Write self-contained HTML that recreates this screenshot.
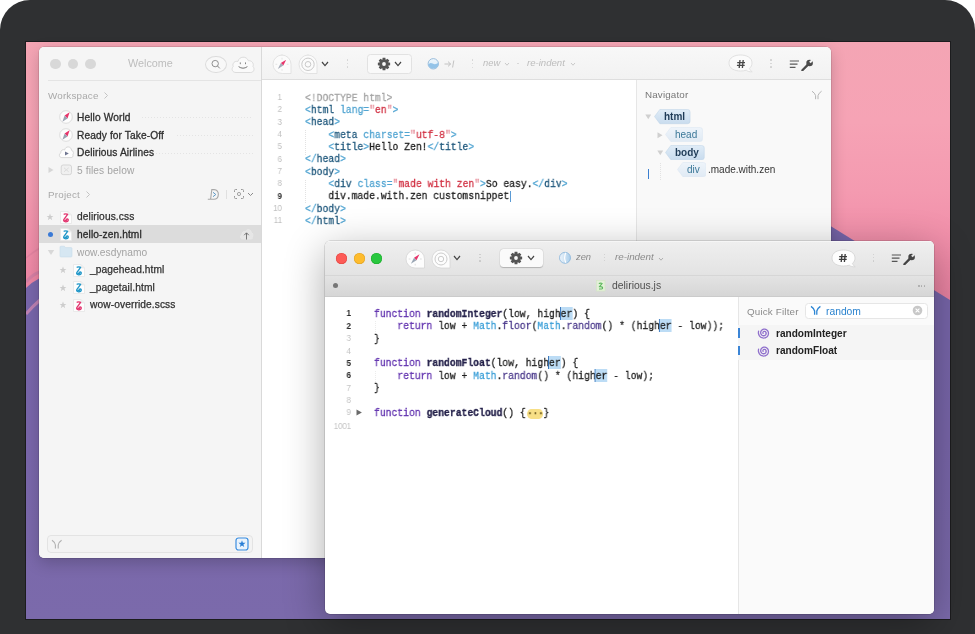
<!DOCTYPE html>
<html><head><meta charset="utf-8">
<style>
*{margin:0;padding:0;box-sizing:border-box}
html,body{width:975px;height:634px;overflow:hidden;background:#fff;font-family:"Liberation Sans",sans-serif}
.abs{position:absolute}
.t{position:absolute;white-space:pre;line-height:1;will-change:transform}
.win{position:absolute;border-radius:5px;overflow:hidden}
.tl{position:absolute;border-radius:50%}
.p{color:#52a5d2}.n{color:#225a7e}.a{color:#52a5d2}.q{color:#e58895}.v{color:#d23345}
.kf{color:#5f2fae}.fn{color:#24214a;font-weight:bold}.mt{color:#3da0d8}.pm{color:#4b3a8c}.hl{background:#bcdcf5;box-shadow:-1px 0 0 #2f6fb8}.pill{display:inline-block;background:#f7df86;border-radius:5px/5px;width:19.5px;height:10px;line-height:8px;text-align:center;color:#6e5c20;vertical-align:0px;font-weight:bold;letter-spacing:-0.5px;margin:0 0 0 1.5px}
</style></head><body>

<div class="abs" style="left:0;top:0;width:975px;height:634px;background:#2f3032;border-radius:30px 30px 0 0"></div>
<div class="abs" style="left:25px;top:41px;width:926px;height:579px;background:#1c1c1e"></div>
<div class="abs" style="left:26px;top:42px;width:924px;height:577px;overflow:hidden;background:linear-gradient(180deg,#f4a5b4 0px,#f6a3b5 80px,#f49ab0 150px,#f08ca8 210px,#ea82a2 260px,#e07c9c 300px)">
<svg width="924" height="577" style="position:absolute;left:0;top:0">
<defs><linearGradient id="pg" x1="0" y1="0" x2="0" y2="1"><stop offset="0.3" stop-color="#7866ab"/><stop offset="0.55" stop-color="#7966aa"/><stop offset="1" stop-color="#7b6aab"/></linearGradient></defs>
<path d="M0,246 Q6,240 14,236 L790,175 L924,258 L924,577 L0,577 Z" fill="url(#pg)"/>
<path d="M0,240 Q7,232 14,230" stroke="#c77ba5" stroke-width="3" fill="none" opacity=".6"/>
<path d="M0,272 Q7,264 14,258" stroke="#d58cb6" stroke-width="3" fill="none" opacity=".75"/>
<path d="M0,216 Q7,210 14,206" stroke="#dc7f9f" stroke-width="1.6" fill="none" opacity=".6"/>
</svg>
</div>
<div class="win" style="left:39px;top:47px;width:792px;height:511px;background:#f5f5f5;box-shadow:0 0 0 0.5px rgba(0,0,0,.18),0 5px 16px rgba(0,0,0,.2)">
<div class="abs" style="left:0px;top:0px;width:222px;height:511px;background:#f5f5f5"></div>
<div class="abs" style="left:222px;top:0px;width:1px;height:511px;background:#d9d9d9"></div>
<div class="tl" style="left:11.1px;top:11.6px;width:10.8px;height:10.8px;background:#d8d8d8"></div>
<div class="tl" style="left:28.7px;top:11.6px;width:10.8px;height:10.8px;background:#d8d8d8"></div>
<div class="tl" style="left:46.3px;top:11.6px;width:10.8px;height:10.8px;background:#d8d8d8"></div>
<div class="t" style="left:89.40px;top:11.22px;font-size:10.8px;color:#bdbdbd;font-weight:normal;font-family:'Liberation Sans',sans-serif;">Welcome</div>
<div class="abs" style="left:166px;top:8.5px;width:21.5px;height:17px;border:1px solid #dcdcdc;border-radius:50%;background:#f8f8f8"></div>
<svg class="abs" style="left:170px;top:11px;" width="13" height="12" viewBox="0 0 13 12"><circle cx="6.2" cy="5.6" r="3.2" fill="none" stroke="#858585" stroke-width="0.9"/><line x1="8.5" y1="8" x2="10.8" y2="10.4" stroke="#858585" stroke-width="1"/></svg>
<svg class="abs" style="left:191px;top:6px;" width="26" height="22" viewBox="0 0 26 22"><path d="M6,19.5 C2.2,19.5 1,15.8 3.2,13.6 C2,10.2 4.8,7.6 8,8.4 C9,3.2 16.6,2.6 18.4,7.8 C21.6,7.2 24.2,10.4 23,13.6 C25,15.6 24,19.5 20.5,19.5 Z" fill="#fafafa" stroke="#d8d8d8" stroke-width="0.9"/><path d="M10.3,9.4 V11.2 M15.5,9.4 V11.2" stroke="#777" stroke-width="0.9"/><path d="M8.6,13.6 Q13,16.8 17.4,13.6" fill="none" stroke="#777" stroke-width="1"/></svg>
<div class="abs" style="left:9px;top:33px;width:213px;height:1px;background:#e4e4e4"></div>
<div class="t" style="left:9.00px;top:44.37px;font-size:9.8px;color:#a9a9a9;font-weight:normal;font-family:'Liberation Sans',sans-serif;letter-spacing:0.19px">Workspace</div>
<svg class="abs" style="left:64px;top:44px;" width="6" height="9" viewBox="0 0 6 9"><path d="M1.5,1.5 L4.5,4.5 L1.5,7.5" fill="none" stroke="#bdbdbd" stroke-width="0.9"/></svg>
<svg class="abs" style="left:19.099999999999994px;top:61.900000000000006px;" width="16" height="16" viewBox="0 0 16 16"><circle cx="8" cy="8" r="6.3" fill="#fdfdfd" stroke="#d6d6d6" stroke-width="0.8"/><path d="M11.6,3.2 L9.5,9.4 L6.6,6.5 Z" fill="#e8336a"/><path d="M4.4,12.8 L6.6,6.5 L9.5,9.4 Z" fill="#9aa2b2"/></svg>
<div class="t" style="left:37.70px;top:65.93px;font-size:10.2px;color:#2f2f2f;font-weight:normal;font-family:'Liberation Sans',sans-serif;-webkit-text-stroke:0.3px #2f2f2f;letter-spacing:0.1px">Hello World</div>
<svg class="abs" style="left:19.099999999999994px;top:79.5px;" width="16" height="16" viewBox="0 0 16 16"><circle cx="8" cy="8" r="6.3" fill="#fdfdfd" stroke="#d6d6d6" stroke-width="0.8"/><path d="M11.6,3.2 L9.5,9.4 L6.6,6.5 Z" fill="#e8336a"/><path d="M4.4,12.8 L6.6,6.5 L9.5,9.4 Z" fill="#9aa2b2"/></svg>
<div class="t" style="left:37.70px;top:83.63px;font-size:10.2px;color:#2f2f2f;font-weight:normal;font-family:'Liberation Sans',sans-serif;-webkit-text-stroke:0.3px #2f2f2f;letter-spacing:0.1px">Ready for Take-Off</div>
<svg class="abs" style="left:19px;top:98px;" width="16" height="14" viewBox="0 0 16 14"><path d="M3.8,12.6 C1,12.6 0.6,8.8 2.8,7.9 C2.4,5.2 5,4 6.6,5 C7.3,0.8 13.2,0.8 13.6,5.4 C15.6,5.6 15.9,8.8 14.8,9.8 C15.6,11.4 14.4,12.6 13.2,12.6 Z" fill="#fdfdfd" stroke="#cfcfcf" stroke-width="0.8"/><path d="M7,6.4 L10.8,8.5 L7,10.6 Z" fill="#6e7590"/></svg>
<div class="t" style="left:37.70px;top:101.33px;font-size:10.2px;color:#2f2f2f;font-weight:normal;font-family:'Liberation Sans',sans-serif;-webkit-text-stroke:0.3px #2f2f2f;letter-spacing:0.1px">Delirious Airlines</div>
<div class="abs" style="left:102.5px;top:70px;width:111.5px;height:1px;background-image:linear-gradient(90deg,#dcdcdc 50%,transparent 50%);background-size:3px 1px;opacity:.7"></div>
<div class="abs" style="left:137.5px;top:88px;width:76.5px;height:1px;background-image:linear-gradient(90deg,#dcdcdc 50%,transparent 50%);background-size:3px 1px;opacity:.7"></div>
<div class="abs" style="left:116.5px;top:105.5px;width:97.5px;height:1px;background-image:linear-gradient(90deg,#dcdcdc 50%,transparent 50%);background-size:3px 1px;opacity:.7"></div>
<svg class="abs" style="left:8px;top:119px;" width="8" height="8" viewBox="0 0 8 8"><path d="M1.5,1 L6.5,4 L1.5,7 Z" fill="#d6d6d6"/></svg>
<svg class="abs" style="left:21px;top:117px;" width="13" height="12" viewBox="0 0 13 12"><rect x="1.2" y="1" width="10.3" height="9.6" rx="2" fill="#f0f0f0" stroke="#d3d3d3" stroke-width="0.9"/><path d="M4,3.8 L8.7,7.8 M8.7,3.8 L4,7.8" stroke="#dcdcdc" stroke-width="1"/></svg>
<div class="t" style="left:37.70px;top:119.23px;font-size:10.2px;color:#a3a3a3;font-weight:normal;font-family:'Liberation Sans',sans-serif;letter-spacing:0.1px">5 files below</div>
<div class="t" style="left:8.80px;top:143.47px;font-size:9.8px;color:#a9a9a9;font-weight:normal;font-family:'Liberation Sans',sans-serif;letter-spacing:0.21px">Project</div>
<svg class="abs" style="left:45.5px;top:143px;" width="6" height="9" viewBox="0 0 6 9"><path d="M1.5,1.5 L4.5,4.5 L1.5,7.5" fill="none" stroke="#bdbdbd" stroke-width="0.9"/></svg>
<svg class="abs" style="left:168px;top:141px;" width="14" height="13" viewBox="0 0 14 13"><path d="M3.6,11.2 L4.8,1.6 H7.2 C13,1.6 12.6,11.2 6.8,11.2 H0.8" fill="none" stroke="#a8a8a8" stroke-width="1.1"/><path d="M6,4.3 L8.8,6.5 L6,8.7" fill="none" stroke="#5f9ac6" stroke-width="1"/></svg>
<div class="abs" style="left:187px;top:143px;width:1px;height:9px;background:#e0e0e0"></div>
<svg class="abs" style="left:194px;top:141px;" width="24" height="13" viewBox="0 0 24 13"><path d="M1.5,4 V2.5 Q1.5,1.5 2.5,1.5 H4 M8,1.5 H9.5 Q10.5,1.5 10.5,2.5 V4 M10.5,8 V9.5 Q10.5,10.5 9.5,10.5 H8 M4,10.5 H2.5 Q1.5,10.5 1.5,9.5 V8" fill="none" stroke="#9a9a9a" stroke-width="1"/><circle cx="6" cy="6" r="1.6" fill="none" stroke="#9a9a9a" stroke-width="0.9"/><path d="M15,5 L17.5,7.5 L20,5" fill="none" stroke="#8a8a8a" stroke-width="1"/></svg>
<div class="abs" style="left:0px;top:178px;width:222px;height:18px;background:#dcdcdc"></div>
<svg class="abs" style="left:7px;top:166.3px;" width="8" height="8" viewBox="0 0 8 8"><path d="M4,0.6 L4.9,3 L7.4,3 L5.4,4.6 L6.2,7.2 L4,5.6 L1.8,7.2 L2.6,4.6 L0.6,3 L3.1,3 Z" fill="#cdcdcd"/></svg>
<svg class="abs" style="left:21px;top:163.5px;" width="12" height="13" viewBox="0 0 12 13"><path d="M0.5,0.5 H8 L11.5,4 V12.5 H0.5 Z" fill="#fdfdfd" stroke="#e6e6e6" stroke-width="0.8"/><path d="M8,0.5 V4 H11.5" fill="#eee" stroke="#e6e6e6" stroke-width="0.6"/><path d="M4.2,3.2 Q6.5,2.6 7.6,3.4 L3.8,8.6 Q3.2,10.6 5.6,10.8 Q8.6,10.8 8.2,8.6 Q7.6,7.6 6.2,8.4" fill="none" stroke="#e3356f" stroke-width="1.35" stroke-linejoin="round" stroke-linecap="round"/><path d="M3.9,9.3 Q5.5,8.2 7.6,9.4 Q6.8,10.6 4.8,10.4 Z" fill="#e3356f"/></svg>
<div class="t" style="left:37.80px;top:165.23px;font-size:10.2px;color:#2f2f2f;font-weight:normal;font-family:'Liberation Sans',sans-serif;-webkit-text-stroke:0.25px #2f2f2f;letter-spacing:0.1px">delirious.css</div>
<div class="tl" style="left:8.600000000000001px;top:184.70000000000002px;width:5.2px;height:5.2px;background:#3a7ad6"></div>
<svg class="abs" style="left:21px;top:181px;" width="12" height="13" viewBox="0 0 12 13"><path d="M0.5,0.5 H8 L11.5,4 V12.5 H0.5 Z" fill="#fdfdfd" stroke="#e6e6e6" stroke-width="0.8"/><path d="M8,0.5 V4 H11.5" fill="#eee" stroke="#e6e6e6" stroke-width="0.6"/><path d="M4.2,3.2 Q6.5,2.6 7.6,3.4 L3.8,8.6 Q3.2,10.6 5.6,10.8 Q8.6,10.8 8.2,8.6 Q7.6,7.6 6.2,8.4" fill="none" stroke="#1e96c8" stroke-width="1.35" stroke-linejoin="round" stroke-linecap="round"/><path d="M3.9,9.3 Q5.5,8.2 7.6,9.4 Q6.8,10.6 4.8,10.4 Z" fill="#1e96c8"/></svg>
<div class="t" style="left:37.80px;top:183.13px;font-size:10.2px;color:#2a2a2a;font-weight:normal;font-family:'Liberation Sans',sans-serif;-webkit-text-stroke:0.3px #2a2a2a;letter-spacing:0.1px">hello-zen.html</div>
<svg class="abs" style="left:200px;top:180px;" width="15" height="14" viewBox="0 0 15 14"><path d="M3.5,12 C1,12 0.8,8.6 2.8,7.8 C2.6,5 5,3.8 6.5,4.8 C7.5,1.5 12,1.8 12.3,5.6 C14.2,6 14.3,9 13.5,10 C14,11.3 13,12 12.2,12 Z" fill="#e6e6e6" stroke="#ececec" stroke-width="0.6"/><path d="M7.5,12.5 V6 M5.2,8.2 L7.5,5.8 L9.8,8.2" fill="none" stroke="#6a6a6a" stroke-width="0.9"/></svg>
<svg class="abs" style="left:8px;top:202px;" width="8" height="7" viewBox="0 0 8 7"><path d="M0.8,1 L7.2,1 L4,6 Z" fill="#d8d8d8"/></svg>
<svg class="abs" style="left:20px;top:198px;" width="14" height="13" viewBox="0 0 14 13"><path d="M1,2.2 Q1,1.2 2,1.2 H5.3 L6.5,2.6 H12 Q13,2.6 13,3.6 V11 Q13,12 12,12 H2 Q1,12 1,11 Z" fill="#d6e7f2" stroke="#c8dcea" stroke-width="0.6"/></svg>
<div class="t" style="left:37.80px;top:200.73px;font-size:10.2px;color:#a3a3a3;font-weight:normal;font-family:'Liberation Sans',sans-serif;letter-spacing:0.05px">wow.esdynamo</div>
<svg class="abs" style="left:19.5px;top:219px;" width="8" height="8" viewBox="0 0 8 8"><path d="M4,0.6 L4.9,3 L7.4,3 L5.4,4.6 L6.2,7.2 L4,5.6 L1.8,7.2 L2.6,4.6 L0.6,3 L3.1,3 Z" fill="#cdcdcd"/></svg>
<svg class="abs" style="left:34px;top:216.5px;" width="12" height="13" viewBox="0 0 12 13"><path d="M0.5,0.5 H8 L11.5,4 V12.5 H0.5 Z" fill="#fdfdfd" stroke="#e6e6e6" stroke-width="0.8"/><path d="M8,0.5 V4 H11.5" fill="#eee" stroke="#e6e6e6" stroke-width="0.6"/><path d="M4.2,3.2 Q6.5,2.6 7.6,3.4 L3.8,8.6 Q3.2,10.6 5.6,10.8 Q8.6,10.8 8.2,8.6 Q7.6,7.6 6.2,8.4" fill="none" stroke="#1e96c8" stroke-width="1.35" stroke-linejoin="round" stroke-linecap="round"/><path d="M3.9,9.3 Q5.5,8.2 7.6,9.4 Q6.8,10.6 4.8,10.4 Z" fill="#1e96c8"/></svg>
<div class="t" style="left:50.50px;top:218.23px;font-size:10.2px;color:#2f2f2f;font-weight:normal;font-family:'Liberation Sans',sans-serif;-webkit-text-stroke:0.25px #2f2f2f;letter-spacing:0.1px">_pagehead.html</div>
<svg class="abs" style="left:19.5px;top:236.5px;" width="8" height="8" viewBox="0 0 8 8"><path d="M4,0.6 L4.9,3 L7.4,3 L5.4,4.6 L6.2,7.2 L4,5.6 L1.8,7.2 L2.6,4.6 L0.6,3 L3.1,3 Z" fill="#cdcdcd"/></svg>
<svg class="abs" style="left:34px;top:234px;" width="12" height="13" viewBox="0 0 12 13"><path d="M0.5,0.5 H8 L11.5,4 V12.5 H0.5 Z" fill="#fdfdfd" stroke="#e6e6e6" stroke-width="0.8"/><path d="M8,0.5 V4 H11.5" fill="#eee" stroke="#e6e6e6" stroke-width="0.6"/><path d="M4.2,3.2 Q6.5,2.6 7.6,3.4 L3.8,8.6 Q3.2,10.6 5.6,10.8 Q8.6,10.8 8.2,8.6 Q7.6,7.6 6.2,8.4" fill="none" stroke="#1e96c8" stroke-width="1.35" stroke-linejoin="round" stroke-linecap="round"/><path d="M3.9,9.3 Q5.5,8.2 7.6,9.4 Q6.8,10.6 4.8,10.4 Z" fill="#1e96c8"/></svg>
<div class="t" style="left:50.50px;top:235.63px;font-size:10.2px;color:#2f2f2f;font-weight:normal;font-family:'Liberation Sans',sans-serif;-webkit-text-stroke:0.25px #2f2f2f;letter-spacing:0.1px">_pagetail.html</div>
<svg class="abs" style="left:19.5px;top:254px;" width="8" height="8" viewBox="0 0 8 8"><path d="M4,0.6 L4.9,3 L7.4,3 L5.4,4.6 L6.2,7.2 L4,5.6 L1.8,7.2 L2.6,4.6 L0.6,3 L3.1,3 Z" fill="#cdcdcd"/></svg>
<svg class="abs" style="left:34px;top:251.5px;" width="12" height="13" viewBox="0 0 12 13"><path d="M0.5,0.5 H8 L11.5,4 V12.5 H0.5 Z" fill="#fdfdfd" stroke="#e6e6e6" stroke-width="0.8"/><path d="M8,0.5 V4 H11.5" fill="#eee" stroke="#e6e6e6" stroke-width="0.6"/><path d="M4.2,3.2 Q6.5,2.6 7.6,3.4 L3.8,8.6 Q3.2,10.6 5.6,10.8 Q8.6,10.8 8.2,8.6 Q7.6,7.6 6.2,8.4" fill="none" stroke="#e3356f" stroke-width="1.35" stroke-linejoin="round" stroke-linecap="round"/><path d="M3.9,9.3 Q5.5,8.2 7.6,9.4 Q6.8,10.6 4.8,10.4 Z" fill="#e3356f"/></svg>
<div class="t" style="left:50.50px;top:252.83px;font-size:10.2px;color:#2f2f2f;font-weight:normal;font-family:'Liberation Sans',sans-serif;-webkit-text-stroke:0.25px #2f2f2f;letter-spacing:0.1px">wow-override.scss</div>
<div class="abs" style="left:8px;top:488px;width:206px;height:18px;border:1px solid #e3e3e3;border-radius:4px;background:#f3f3f3"></div>
<svg class="abs" style="left:11.5px;top:491.5px;" width="12" height="11" viewBox="0 0 12 11"><path d="M1,1.3 Q4,3.3 4.4,6 V9.6 M10.6,1.3 Q7.6,3.3 7.2,6 V9.6" fill="none" stroke="#b0b0b0" stroke-width="1.1"/></svg>
<svg class="abs" style="left:196px;top:490px;" width="14" height="14" viewBox="0 0 14 14"><rect x="1" y="1" width="12" height="12" rx="2.5" fill="#eaf3fc" stroke="#3b8ee0" stroke-width="1.2"/><path d="M7,3.3 L7.9,5.8 L10.6,5.8 L8.4,7.4 L9.2,10 L7,8.4 L4.8,10 L5.6,7.4 L3.4,5.8 L6.1,5.8 Z" fill="#2a7fd6"/></svg>
<div class="abs" style="left:223px;top:0px;width:569px;height:33px;background:linear-gradient(#f8f8f8,#f2f2f2);border-bottom:1px solid #dedede"></div>
<div class="abs" style="left:223px;top:33px;width:374px;height:478px;background:#fff"></div>
<div class="abs" style="left:597px;top:33px;width:195px;height:478px;background:#f9f9f9;border-left:1px solid #e6e6e6"></div>
<svg class="abs" style="left:233px;top:7px;" width="20" height="20.5" viewBox="0 0 20 20.5"><path d="M10.25,1 H9.75 A9.25,9.25 0 0 1 19,10.25 V19.5 H10.25 A9.25,9.25 0 0 1 1,10.25 A9.25,9.25 0 0 1 10.25,1 Z" fill="#fbfbfb" stroke="#e0e0e0" stroke-width="0.9"/><g transform="translate(10,10.3)"><path d="M0,-6.5 V-4.8 M0,4.8 V6.5 M-6.5,0 H-4.8 M4.8,0 H6.5" stroke="#ddd" stroke-width="0.8"/><path d="M4.2,-4.6 L1.3,1.2 L-1.2,-1.2 Z" fill="#e8336a"/><path d="M-4.2,4.6 L-1.2,-1.2 L1.3,1.2 Z" fill="#a4abb8"/></g></svg>
<svg class="abs" style="left:259px;top:7px;" width="20" height="20.5" viewBox="0 0 20 20.5"><path d="M10.25,1 H9.75 A9.25,9.25 0 0 1 19,10.25 V19.5 H10.25 A9.25,9.25 0 0 1 1,10.25 A9.25,9.25 0 0 1 10.25,1 Z" fill="#fbfbfb" stroke="#e0e0e0" stroke-width="0.9"/><circle cx="10" cy="10.3" r="6.2" fill="none" stroke="#c9c9c9" stroke-width="1"/><circle cx="10" cy="10.3" r="2.8" fill="none" stroke="#c9c9c9" stroke-width="1"/></svg>
<svg class="abs" style="left:282px;top:14.200000000000003px;" width="8" height="5.6" viewBox="0 0 8 5.6"><path d="M1,1 L4.0,4.6 L7,1" fill="none" stroke="#444" stroke-width="1.2"/></svg>
<div class="tl" style="left:307.9px;top:12.4px;width:1.2px;height:1.2px;background:#d4d4d4"></div>
<div class="tl" style="left:307.9px;top:15.9px;width:1.2px;height:1.2px;background:#d4d4d4"></div>
<div class="tl" style="left:307.9px;top:19.4px;width:1.2px;height:1.2px;background:#d4d4d4"></div>
<div class="abs" style="left:327.5px;top:6.5px;width:45px;height:20px;border:1px solid #e2e2e2;border-radius:3.5px;background:#f9f9f9"></div>
<svg class="abs" style="left:336.7px;top:8.799999999999997px;" width="16" height="16" viewBox="0 0 16 16"><g transform="translate(-375.7,-55.8)"><path d="M389.85,62.43 L389.85,65.17 L387.75,65.51 L387.78,65.45 L389.02,67.18 L387.08,69.12 L385.35,67.88 L385.41,67.85 L385.07,69.95 L382.33,69.95 L381.99,67.85 L382.05,67.88 L380.32,69.12 L378.38,67.18 L379.62,65.45 L379.65,65.51 L377.55,65.17 L377.55,62.43 L379.65,62.09 L379.62,62.15 L378.38,60.42 L380.32,58.48 L382.05,59.72 L381.99,59.75 L382.33,57.65 L385.07,57.65 L385.41,59.75 L385.35,59.72 L387.08,58.48 L389.02,60.42 L387.78,62.15 L387.75,62.09 Z" fill="#555"/><circle cx="383.7" cy="63.8" r="1.9" fill="#f9f9f9"/></g></svg>
<svg class="abs" style="left:355.4px;top:14.100000000000001px;" width="8" height="5.6" viewBox="0 0 8 5.6"><path d="M1,1 L4.0,4.6 L7,1" fill="none" stroke="#444" stroke-width="1.2"/></svg>
<svg class="abs" style="left:387px;top:10px;" width="14" height="14" viewBox="0 0 14 14"><defs><linearGradient id="bb1" x1="0" y1="0" x2="0" y2="1"><stop offset="0" stop-color="#eef6fc"/><stop offset="1" stop-color="#d6e9f7"/></linearGradient></defs><circle cx="7.3" cy="6.8" r="5.2" fill="url(#bb1)" stroke="#86b0d4" stroke-width="0.8"/><path d="M2.2,7.6 Q4,5.2 6.6,6.6 Q9.5,8 12.4,5.8 A5.2,5.2 0 0 1 2.2,7.6 Z" fill="#93c3e8"/></svg>
<svg class="abs" style="left:404px;top:12px;" width="13" height="10" viewBox="0 0 13 10"><path d="M1.5,5 H7.5 M5,2.6 L7.6,5 L5,7.4 M10.8,1.5 L9.6,8.5" fill="none" stroke="#bdbdbd" stroke-width="0.9"/></svg>
<div class="tl" style="left:433.1px;top:12.4px;width:1.2px;height:1.2px;background:#d4d4d4"></div>
<div class="tl" style="left:433.1px;top:16.0px;width:1.2px;height:1.2px;background:#d4d4d4"></div>
<div class="tl" style="left:433.1px;top:19.7px;width:1.2px;height:1.2px;background:#d4d4d4"></div>
<div class="t" style="left:443.90px;top:11.41px;font-size:9.4px;color:#bcbcbc;font-weight:normal;font-family:'Liberation Sans',sans-serif;font-style:italic">new</div>
<svg class="abs" style="left:464.7px;top:15.200000000000003px;" width="6" height="4.2" viewBox="0 0 6 4.2"><path d="M1,1 L3.0,3.2 L5,1" fill="none" stroke="#c4c4c4" stroke-width="0.9"/></svg>
<div class="tl" style="left:478.4px;top:16.0px;width:1.2px;height:1.2px;background:#d4d4d4"></div>
<div class="t" style="left:488.30px;top:11.24px;font-size:9.6px;color:#bcbcbc;font-weight:normal;font-family:'Liberation Sans',sans-serif;font-style:italic">re-indent</div>
<svg class="abs" style="left:530.7px;top:15.200000000000003px;" width="6" height="4.2" viewBox="0 0 6 4.2"><path d="M1,1 L3.0,3.2 L5,1" fill="none" stroke="#c4c4c4" stroke-width="0.9"/></svg>
<svg class="abs" style="left:689px;top:7px;" width="26" height="20" viewBox="0 0 26 20"><path d="M12.5,1 C18.5,1 24,3.5 24,9 C24,11.5 23,13 21.5,14.3 C22,16 23,17 24.2,17.8 C21.5,18 19.5,17.3 18.3,16.2 C16.5,16.8 14.5,17 12.5,17 C6.5,17 1,14.5 1,9 C1,3.5 6.5,1 12.5,1 Z" fill="#fbfbfb" stroke="#dedede" stroke-width="0.9"/></svg>
<svg class="abs" style="left:697.4px;top:12.299999999999997px;" width="10" height="10" viewBox="0 0 10 10"><path d="M4,1 L3.2,9 M7.2,1 L6.4,9 M1.2,3.6 H9 M0.9,6.4 H8.7" stroke="#4a4a4a" stroke-width="1.35" fill="none"/></svg>
<div class="tl" style="left:731.4px;top:12.4px;width:1.2px;height:1.2px;background:#d4d4d4"></div>
<div class="tl" style="left:731.4px;top:15.9px;width:1.2px;height:1.2px;background:#d4d4d4"></div>
<div class="tl" style="left:731.4px;top:19.4px;width:1.2px;height:1.2px;background:#d4d4d4"></div>
<svg class="abs" style="left:749px;top:12px;" width="27" height="12" viewBox="0 0 27 12"><path d="M1.8,2 H11 M1.8,5.2 H9.5 M1.8,8.4 H7.5" stroke="#5a5a5a" stroke-width="1.2"/><line x1="14.4" y1="11.2" x2="20" y2="5.6" stroke="#4a4a4a" stroke-width="2.3" stroke-linecap="round"/><circle cx="21.6" cy="4" r="3.3" fill="#4a4a4a"/><path d="M21.9,3.6 L25.5,0" stroke="#f4f4f4" stroke-width="2.1"/></svg>
<div class="t" style="left:243.30px;top:45.98px;font-size:9.2px;color:#c0c0c0;font-weight:normal;font-family:'Liberation Sans',sans-serif;transform:translateX(-100%) scaleX(.86);transform-origin:100% 0">1</div>
<div class="t" style="left:266.00px;top:44.66px;font-size:11.5px;color:#1d1d1d;font-weight:normal;font-family:'Liberation Mono',monospace;transform:scaleX(0.8452);transform-origin:0 0;-webkit-text-stroke:0.3px currentColor;"><span style="color:#a4a4a4">&lt;!DOCTYPE html&gt;</span></div>
<div class="t" style="left:243.30px;top:58.32px;font-size:9.2px;color:#c0c0c0;font-weight:normal;font-family:'Liberation Sans',sans-serif;transform:translateX(-100%) scaleX(.86);transform-origin:100% 0">2</div>
<div class="t" style="left:266.00px;top:57.00px;font-size:11.5px;color:#1d1d1d;font-weight:normal;font-family:'Liberation Mono',monospace;transform:scaleX(0.8452);transform-origin:0 0;-webkit-text-stroke:0.3px currentColor;"><span class="p">&lt;</span><span class="n">html</span> <span class="a">lang</span><span class="p">=</span><span class="q">"</span><span class="v">en</span><span class="q">"</span><span class="p">&gt;</span></div>
<div class="t" style="left:243.30px;top:70.66px;font-size:9.2px;color:#c0c0c0;font-weight:normal;font-family:'Liberation Sans',sans-serif;transform:translateX(-100%) scaleX(.86);transform-origin:100% 0">3</div>
<div class="t" style="left:266.00px;top:69.34px;font-size:11.5px;color:#1d1d1d;font-weight:normal;font-family:'Liberation Mono',monospace;transform:scaleX(0.8452);transform-origin:0 0;-webkit-text-stroke:0.3px currentColor;"><span class="p">&lt;</span><span class="n">head</span><span class="p">&gt;</span></div>
<div class="t" style="left:243.30px;top:83.00px;font-size:9.2px;color:#c0c0c0;font-weight:normal;font-family:'Liberation Sans',sans-serif;transform:translateX(-100%) scaleX(.86);transform-origin:100% 0">4</div>
<div class="t" style="left:266.00px;top:81.68px;font-size:11.5px;color:#1d1d1d;font-weight:normal;font-family:'Liberation Mono',monospace;transform:scaleX(0.8452);transform-origin:0 0;-webkit-text-stroke:0.3px currentColor;">    <span class="p">&lt;</span><span class="n">meta</span> <span class="a">charset</span><span class="p">=</span><span class="q">"</span><span class="v">utf-8</span><span class="q">"</span><span class="p">&gt;</span></div>
<div class="t" style="left:243.30px;top:95.34px;font-size:9.2px;color:#c0c0c0;font-weight:normal;font-family:'Liberation Sans',sans-serif;transform:translateX(-100%) scaleX(.86);transform-origin:100% 0">5</div>
<div class="t" style="left:266.00px;top:94.02px;font-size:11.5px;color:#1d1d1d;font-weight:normal;font-family:'Liberation Mono',monospace;transform:scaleX(0.8452);transform-origin:0 0;-webkit-text-stroke:0.3px currentColor;">    <span class="p">&lt;</span><span class="n">title</span><span class="p">&gt;</span>Hello Zen!<span class="p">&lt;/</span><span class="n">title</span><span class="p">&gt;</span></div>
<div class="t" style="left:243.30px;top:107.68px;font-size:9.2px;color:#c0c0c0;font-weight:normal;font-family:'Liberation Sans',sans-serif;transform:translateX(-100%) scaleX(.86);transform-origin:100% 0">6</div>
<div class="t" style="left:266.00px;top:106.36px;font-size:11.5px;color:#1d1d1d;font-weight:normal;font-family:'Liberation Mono',monospace;transform:scaleX(0.8452);transform-origin:0 0;-webkit-text-stroke:0.3px currentColor;"><span class="p">&lt;/</span><span class="n">head</span><span class="p">&gt;</span></div>
<div class="t" style="left:243.30px;top:120.02px;font-size:9.2px;color:#c0c0c0;font-weight:normal;font-family:'Liberation Sans',sans-serif;transform:translateX(-100%) scaleX(.86);transform-origin:100% 0">7</div>
<div class="t" style="left:266.00px;top:118.70px;font-size:11.5px;color:#1d1d1d;font-weight:normal;font-family:'Liberation Mono',monospace;transform:scaleX(0.8452);transform-origin:0 0;-webkit-text-stroke:0.3px currentColor;"><span class="p">&lt;</span><span class="n">body</span><span class="p">&gt;</span></div>
<div class="t" style="left:243.30px;top:132.36px;font-size:9.2px;color:#c0c0c0;font-weight:normal;font-family:'Liberation Sans',sans-serif;transform:translateX(-100%) scaleX(.86);transform-origin:100% 0">8</div>
<div class="t" style="left:266.00px;top:131.04px;font-size:11.5px;color:#1d1d1d;font-weight:normal;font-family:'Liberation Mono',monospace;transform:scaleX(0.8452);transform-origin:0 0;-webkit-text-stroke:0.3px currentColor;">    <span class="p">&lt;</span><span class="n">div</span> <span class="a">class</span><span class="p">=</span><span class="q">"</span><span class="v">made with zen</span><span class="q">"</span><span class="p">&gt;</span>So easy.<span class="p">&lt;/</span><span class="n">div</span><span class="p">&gt;</span></div>
<div class="t" style="left:243.30px;top:144.70px;font-size:9.2px;color:#333;font-weight:bold;font-family:'Liberation Sans',sans-serif;transform:translateX(-100%) scaleX(.86);transform-origin:100% 0">9</div>
<div class="t" style="left:266.00px;top:143.38px;font-size:11.5px;color:#1d1d1d;font-weight:normal;font-family:'Liberation Mono',monospace;transform:scaleX(0.8452);transform-origin:0 0;-webkit-text-stroke:0.3px currentColor;">    div.made.with.zen customsnippet</div>
<div class="t" style="left:243.30px;top:157.04px;font-size:9.2px;color:#c0c0c0;font-weight:normal;font-family:'Liberation Sans',sans-serif;transform:translateX(-100%) scaleX(.86);transform-origin:100% 0">10</div>
<div class="t" style="left:266.00px;top:155.72px;font-size:11.5px;color:#1d1d1d;font-weight:normal;font-family:'Liberation Mono',monospace;transform:scaleX(0.8452);transform-origin:0 0;-webkit-text-stroke:0.3px currentColor;"><span class="p">&lt;/</span><span class="n">body</span><span class="p">&gt;</span></div>
<div class="t" style="left:243.30px;top:169.38px;font-size:9.2px;color:#c0c0c0;font-weight:normal;font-family:'Liberation Sans',sans-serif;transform:translateX(-100%) scaleX(.86);transform-origin:100% 0">11</div>
<div class="t" style="left:266.00px;top:168.06px;font-size:11.5px;color:#1d1d1d;font-weight:normal;font-family:'Liberation Mono',monospace;transform:scaleX(0.8452);transform-origin:0 0;-webkit-text-stroke:0.3px currentColor;"><span class="p">&lt;/</span><span class="n">html</span><span class="p">&gt;</span></div>
<div class="abs" style="left:266px;top:83px;width:1px;height:25px;background-image:linear-gradient(#e2e2e2 50%,transparent 50%);background-size:1px 2px"></div>
<div class="abs" style="left:266px;top:133px;width:1px;height:24px;background-image:linear-gradient(#e2e2e2 50%,transparent 50%);background-size:1px 2px"></div>
<div class="abs" style="left:470.5px;top:143.5px;width:1px;height:11px;background:#5b9bd5"></div>
<div class="t" style="left:605.70px;top:43.47px;font-size:9.8px;color:#777;font-weight:normal;font-family:'Liberation Sans',sans-serif;letter-spacing:0.16px">Navigator</div>
<svg class="abs" style="left:771.5px;top:43px;" width="12" height="10" viewBox="0 0 12 10"><path d="M1,1.2 Q4,3.2 4.6,5.6 V9.2 M10.6,1.2 Q7.6,3.2 7,5.6 V9.2" fill="none" stroke="#b4b4b4" stroke-width="1"/></svg>
<svg class="abs" style="left:606px;top:67.2px;" width="7" height="6" viewBox="0 0 7 6"><path d="M0.3,0.5 H6.2 L3.25,5.3 Z" fill="#d0d0d0"/></svg>
<svg class="abs" style="left:615px;top:62.400000000000006px;" width="36.60000000000002" height="15.199999999999989" viewBox="0 0 36.60000000000002 15.199999999999989"><defs><linearGradient id="tg1" x1="0" y1="0" x2="0" y2="1"><stop offset="0" stop-color="#e0ecf7"/><stop offset="1" stop-color="#c9dcee"/></linearGradient></defs><path d="M0.5,7.599999999999994 L5.824999999999996,0.5 H33.60000000000002 Q36.10000000000002,0.5 36.10000000000002,3 V12.199999999999989 Q36.10000000000002,14.699999999999989 33.60000000000002,14.699999999999989 H5.824999999999996 Z" fill="url(#tg1)" stroke="#bdd2e6" stroke-width="0.5"/></svg>
<div class="t" style="left:625.00px;top:65.40px;font-size:10px;color:#1f3b57;font-weight:bold;font-family:'Liberation Sans',sans-serif;">html</div>
<svg class="abs" style="left:618.3px;top:85px;" width="6" height="7" viewBox="0 0 6 7"><path d="M0.5,0.3 V6.2 L5.5,3.25 Z" fill="#d0d0d0"/></svg>
<svg class="abs" style="left:626.2px;top:80.3px;" width="38.0" height="15.000000000000014" viewBox="0 0 38.0 15.000000000000014"><defs><linearGradient id="tg2" x1="0" y1="0" x2="0" y2="1"><stop offset="0" stop-color="#eef4fa"/><stop offset="1" stop-color="#e0eaf4"/></linearGradient></defs><path d="M0.5,7.500000000000007 L5.750000000000005,0.5 H35.0 Q37.5,0.5 37.5,3 V12.000000000000014 Q37.5,14.500000000000014 35.0,14.500000000000014 H5.750000000000005 Z" fill="url(#tg2)" stroke="#d8e4f0" stroke-width="0.5"/></svg>
<div class="t" style="left:636.00px;top:83.20px;font-size:10px;color:#3b7898;font-weight:normal;font-family:'Liberation Sans',sans-serif;">head</div>
<svg class="abs" style="left:618px;top:103px;" width="7" height="6" viewBox="0 0 7 6"><path d="M0.3,0.5 H6.2 L3.25,5.3 Z" fill="#d0d0d0"/></svg>
<svg class="abs" style="left:626px;top:97.6px;" width="39.799999999999955" height="15.200000000000017" viewBox="0 0 39.799999999999955 15.200000000000017"><defs><linearGradient id="tg3" x1="0" y1="0" x2="0" y2="1"><stop offset="0" stop-color="#e0ecf7"/><stop offset="1" stop-color="#c9dcee"/></linearGradient></defs><path d="M0.5,7.6000000000000085 L5.825000000000006,0.5 H36.799999999999955 Q39.299999999999955,0.5 39.299999999999955,3 V12.200000000000017 Q39.299999999999955,14.700000000000017 36.799999999999955,14.700000000000017 H5.825000000000006 Z" fill="url(#tg3)" stroke="#bdd2e6" stroke-width="0.5"/></svg>
<div class="t" style="left:636.00px;top:100.60px;font-size:10px;color:#1f3b57;font-weight:bold;font-family:'Liberation Sans',sans-serif;">body</div>
<svg class="abs" style="left:638px;top:115.30000000000001px;" width="29.399999999999977" height="15.199999999999989" viewBox="0 0 29.399999999999977 15.199999999999989"><defs><linearGradient id="tg4" x1="0" y1="0" x2="0" y2="1"><stop offset="0" stop-color="#eef4fa"/><stop offset="1" stop-color="#e0eaf4"/></linearGradient></defs><path d="M0.5,7.599999999999994 L5.824999999999996,0.5 H26.399999999999977 Q28.899999999999977,0.5 28.899999999999977,3 V12.199999999999989 Q28.899999999999977,14.699999999999989 26.399999999999977,14.699999999999989 H5.824999999999996 Z" fill="url(#tg4)" stroke="#d8e4f0" stroke-width="0.5"/></svg>
<div class="t" style="left:648.00px;top:117.90px;font-size:10px;color:#3b7898;font-weight:normal;font-family:'Liberation Sans',sans-serif;">div</div>
<div class="t" style="left:668.80px;top:117.90px;font-size:10px;color:#333;font-weight:normal;font-family:'Liberation Sans',sans-serif;">.made.with.zen</div>
<div class="abs" style="left:608.6px;top:121.6px;width:1.6px;height:10.2px;background:#3b7fd0"></div>
<div class="abs" style="left:620.5px;top:116px;width:1px;height:17px;background-image:linear-gradient(#e2e2e2 50%,transparent 50%);background-size:1px 2px"></div>
</div>
<div class="win" style="left:325px;top:241px;width:609px;height:373px;background:#fff;box-shadow:0 0 0 0.5px rgba(0,0,0,.22),0 10px 40px rgba(0,0,0,.33)">
<div class="abs" style="left:0px;top:0px;width:609px;height:35px;background:linear-gradient(#efefef,#e3e3e3);border-bottom:1px solid #d6d6d6"></div>
<div class="abs" style="left:0px;top:35px;width:609px;height:21px;background:linear-gradient(#e3e3e3,#d6d6d6);border-bottom:1px solid #cbcbcb"></div>
<div class="abs" style="left:0px;top:0px;width:609px;height:1px;background:#f6f6f6"></div>
<div class="tl" style="left:10.899999999999977px;top:11.5px;width:11px;height:11px;background:#fd5b57;box-shadow:inset 0 0 0 0.5px #e0443e"></div>
<div class="tl" style="left:28.69999999999999px;top:11.5px;width:11px;height:11px;background:#febc2e;box-shadow:inset 0 0 0 0.5px #dea123"></div>
<div class="tl" style="left:46.30000000000001px;top:11.5px;width:11px;height:11px;background:#29c73f;box-shadow:inset 0 0 0 0.5px #1aab29"></div>
<svg class="abs" style="left:79.5px;top:8px;" width="20.5" height="20" viewBox="0 0 20.5 20"><path d="M10.0,1 H10.5 A9.0,9.0 0 0 1 19.5,10.0 V19 H10.0 A9.0,9.0 0 0 1 1,10.0 A9.0,9.0 0 0 1 10.0,1 Z" fill="#fdfdfd" stroke="#d6d6d6" stroke-width="0.8"/><g transform="translate(10.2,10)"><path d="M0,-6.5 V-4.8 M0,4.8 V6.5 M-6.5,0 H-4.8 M4.8,0 H6.5" stroke="#d4d4d4" stroke-width="0.8"/><path d="M4.3,-4.7 L1.3,1.2 L-1.2,-1.2 Z" fill="#e8336a"/><path d="M-4.3,4.7 L-1.2,-1.2 L1.3,1.2 Z" fill="#9aa6b4"/></g></svg>
<svg class="abs" style="left:105.5px;top:8px;" width="20" height="20" viewBox="0 0 20 20"><path d="M10.0,1 H10.0 A9.0,9.0 0 0 1 19,10.0 V19 H10.0 A9.0,9.0 0 0 1 1,10.0 A9.0,9.0 0 0 1 10.0,1 Z" fill="#fdfdfd" stroke="#d6d6d6" stroke-width="0.8"/><circle cx="10" cy="10" r="6" fill="none" stroke="#cdcdcd" stroke-width="1"/><circle cx="10" cy="10" r="2.7" fill="none" stroke="#cdcdcd" stroke-width="1"/></svg>
<svg class="abs" style="left:128.39999999999998px;top:14px;" width="8" height="5.6" viewBox="0 0 8 5.6"><path d="M1,1 L4.0,4.6 L7,1" fill="none" stroke="#444" stroke-width="1.2"/></svg>
<div class="tl" style="left:154.4px;top:12.9px;width:1.2px;height:1.2px;background:#cacaca"></div>
<div class="tl" style="left:154.4px;top:16.1px;width:1.2px;height:1.2px;background:#cacaca"></div>
<div class="tl" style="left:154.4px;top:19.4px;width:1.2px;height:1.2px;background:#cacaca"></div>
<div class="abs" style="left:174.89999999999998px;top:7.699999999999989px;width:43px;height:18.5px;background:#fafafa;border-radius:3.5px;box-shadow:0 0.5px 1px rgba(0,0,0,.2),0 0 0 0.5px rgba(0,0,0,.06)"></div>
<svg class="abs" style="left:182.89999999999998px;top:8.699999999999989px;" width="16" height="16" viewBox="0 0 16 16"><g transform="translate(-507.9,-249.7)"><path d="M522.05,256.33 L522.05,259.07 L519.95,259.41 L519.98,259.35 L521.22,261.08 L519.28,263.02 L517.55,261.78 L517.61,261.75 L517.27,263.85 L514.53,263.85 L514.19,261.75 L514.25,261.78 L512.52,263.02 L510.58,261.08 L511.82,259.35 L511.85,259.41 L509.75,259.07 L509.75,256.33 L511.85,255.99 L511.82,256.05 L510.58,254.32 L512.52,252.38 L514.25,253.62 L514.19,253.65 L514.53,251.55 L517.27,251.55 L517.61,253.65 L517.55,253.62 L519.28,252.38 L521.22,254.32 L519.98,256.05 L519.95,255.99 Z" fill="#555"/><circle cx="515.9" cy="257.7" r="1.9" fill="#fafafa"/></g></svg>
<svg class="abs" style="left:202.20000000000005px;top:14.100000000000023px;" width="8" height="5.6" viewBox="0 0 8 5.6"><path d="M1,1 L4.0,4.6 L7,1" fill="none" stroke="#444" stroke-width="1.2"/></svg>
<svg class="abs" style="left:233px;top:10px;" width="14" height="14" viewBox="0 0 14 14"><defs><linearGradient id="bb2" x1="0" y1="0" x2="1" y2="0"><stop offset="0" stop-color="#eef5fb"/><stop offset="1" stop-color="#a9cdea"/></linearGradient></defs><circle cx="7" cy="6.8" r="5.5" fill="url(#bb2)" stroke="#86b4da" stroke-width="0.8"/><path d="M7.8,1.8 Q5.5,6.8 7.8,11.8" fill="none" stroke="#fff" stroke-width="1.2"/></svg>
<div class="t" style="left:251.40px;top:12.19px;font-size:9.3px;color:#8a8a8a;font-weight:normal;font-family:'Liberation Sans',sans-serif;font-style:italic">zen</div>
<div class="tl" style="left:279.1px;top:13.0px;width:1.2px;height:1.2px;background:#cacaca"></div>
<div class="tl" style="left:279.1px;top:16.1px;width:1.2px;height:1.2px;background:#cacaca"></div>
<div class="tl" style="left:279.1px;top:19.2px;width:1.2px;height:1.2px;background:#cacaca"></div>
<div class="t" style="left:290.40px;top:11.17px;font-size:9.8px;color:#8a8a8a;font-weight:normal;font-family:'Liberation Sans',sans-serif;font-style:italic">re-indent</div>
<svg class="abs" style="left:332.79999999999995px;top:16px;" width="6" height="4.2" viewBox="0 0 6 4.2"><path d="M1,1 L3.0,3.2 L5,1" fill="none" stroke="#a8a8a8" stroke-width="0.9"/></svg>
<svg class="abs" style="left:506px;top:7.5px;" width="26" height="20" viewBox="0 0 26 20"><path d="M12.5,1 C18.5,1 24,3.5 24,9 C24,11.5 23,13 21.5,14.3 C22,16 23,17 24.2,17.8 C21.5,18 19.5,17.3 18.3,16.2 C16.5,16.8 14.5,17 12.5,17 C6.5,17 1,14.5 1,9 C1,3.5 6.5,1 12.5,1 Z" fill="#fdfdfd" stroke="#d2d2d2" stroke-width="0.8"/></svg>
<svg class="abs" style="left:513.4px;top:12.199999999999989px;" width="10" height="10" viewBox="0 0 10 10"><path d="M4,1 L3.2,9 M7.2,1 L6.4,9 M1.2,3.6 H9 M0.9,6.4 H8.7" stroke="#3c3c3c" stroke-width="1.35" fill="none"/></svg>
<div class="tl" style="left:547.8px;top:12.9px;width:1.2px;height:1.2px;background:#cacaca"></div>
<div class="tl" style="left:547.8px;top:16.1px;width:1.2px;height:1.2px;background:#cacaca"></div>
<div class="tl" style="left:547.8px;top:19.4px;width:1.2px;height:1.2px;background:#cacaca"></div>
<svg class="abs" style="left:565px;top:12px;" width="27" height="12" viewBox="0 0 27 12"><path d="M1.8,2 H11 M1.8,5.2 H9.5 M1.8,8.4 H7.5" stroke="#555" stroke-width="1.2"/><line x1="14.4" y1="11.2" x2="20" y2="5.6" stroke="#444" stroke-width="2.3" stroke-linecap="round"/><circle cx="21.6" cy="4" r="3.3" fill="#444"/><path d="M21.9,3.6 L25.5,0" stroke="#e6e6e6" stroke-width="2.1"/></svg>
<div class="tl" style="left:7.800000000000011px;top:42.19999999999999px;width:5px;height:5px;background:#767676"></div>
<svg class="abs" style="left:271px;top:39px;" width="10" height="12" viewBox="0 0 10 12"><rect x="0.5" y="0.5" width="8.5" height="10.5" fill="#e3f0d8" stroke="#d3e6c4" stroke-width="0.6"/><path d="M2.8,3.6 Q4.5,2.8 6.2,3.4 L3.3,6.8 Q5,6.2 6.5,7.3 Q6.9,8.8 5.5,9 L3,9" fill="none" stroke="#5cb85c" stroke-width="1.1" stroke-linejoin="round"/></svg>
<div class="t" style="left:287.00px;top:40.06px;font-size:10.4px;color:#505050;font-weight:normal;font-family:'Liberation Sans',sans-serif;">delirious.js</div>
<div class="tl" style="left:593.4px;top:44.4px;width:1.3px;height:1.3px;background:#aaa"></div>
<div class="tl" style="left:596.0px;top:44.4px;width:1.3px;height:1.3px;background:#aaa"></div>
<div class="tl" style="left:598.6px;top:44.4px;width:1.3px;height:1.3px;background:#aaa"></div>
<div class="t" style="left:25.50px;top:67.41px;font-size:9.4px;color:#2a2a2a;font-weight:bold;font-family:'Liberation Sans',sans-serif;transform:translateX(-100%) scaleX(.86);transform-origin:100% 0">1</div>
<div class="t" style="left:25.50px;top:79.79px;font-size:9.4px;color:#2a2a2a;font-weight:bold;font-family:'Liberation Sans',sans-serif;transform:translateX(-100%) scaleX(.86);transform-origin:100% 0">2</div>
<div class="t" style="left:25.50px;top:92.17px;font-size:9.4px;color:#c4c4c4;font-weight:normal;font-family:'Liberation Sans',sans-serif;transform:translateX(-100%) scaleX(.86);transform-origin:100% 0">3</div>
<div class="t" style="left:25.50px;top:104.55px;font-size:9.4px;color:#c4c4c4;font-weight:normal;font-family:'Liberation Sans',sans-serif;transform:translateX(-100%) scaleX(.86);transform-origin:100% 0">4</div>
<div class="t" style="left:25.50px;top:116.93px;font-size:9.4px;color:#2a2a2a;font-weight:bold;font-family:'Liberation Sans',sans-serif;transform:translateX(-100%) scaleX(.86);transform-origin:100% 0">5</div>
<div class="t" style="left:25.50px;top:129.31px;font-size:9.4px;color:#2a2a2a;font-weight:bold;font-family:'Liberation Sans',sans-serif;transform:translateX(-100%) scaleX(.86);transform-origin:100% 0">6</div>
<div class="t" style="left:25.50px;top:141.69px;font-size:9.4px;color:#c4c4c4;font-weight:normal;font-family:'Liberation Sans',sans-serif;transform:translateX(-100%) scaleX(.86);transform-origin:100% 0">7</div>
<div class="t" style="left:25.50px;top:154.07px;font-size:9.4px;color:#c4c4c4;font-weight:normal;font-family:'Liberation Sans',sans-serif;transform:translateX(-100%) scaleX(.86);transform-origin:100% 0">8</div>
<div class="t" style="left:25.50px;top:166.45px;font-size:9.4px;color:#c4c4c4;font-weight:normal;font-family:'Liberation Sans',sans-serif;transform:translateX(-100%) scaleX(.86);transform-origin:100% 0">9</div>
<div class="t" style="left:25.50px;top:179.51px;font-size:9.4px;color:#c4c4c4;font-weight:normal;font-family:'Liberation Sans',sans-serif;transform:translateX(-100%) scaleX(.86);transform-origin:100% 0;letter-spacing:-0.2px">1001</div>
<div class="t" style="left:48.80px;top:66.76px;font-size:11.5px;color:#1e1e1e;font-weight:normal;font-family:'Liberation Mono',monospace;transform:scaleX(0.8452);transform-origin:0 0;-webkit-text-stroke:0.3px currentColor;"><span class="kf">function</span> <b class="fn">randomInteger</b>(low, high<span class="hl">er</span>) {</div>
<div class="t" style="left:48.80px;top:79.14px;font-size:11.5px;color:#1e1e1e;font-weight:normal;font-family:'Liberation Mono',monospace;transform:scaleX(0.8452);transform-origin:0 0;-webkit-text-stroke:0.3px currentColor;">    <span class="kf">return</span> low + <span class="mt">Math</span>.<span class="pm">floor</span>(<span class="mt">Math</span>.<span class="pm">random</span>() * (high<span class="hl">er</span> - low));</div>
<div class="t" style="left:48.80px;top:91.52px;font-size:11.5px;color:#1e1e1e;font-weight:normal;font-family:'Liberation Mono',monospace;transform:scaleX(0.8452);transform-origin:0 0;-webkit-text-stroke:0.3px currentColor;">}</div>
<div class="t" style="left:48.80px;top:116.28px;font-size:11.5px;color:#1e1e1e;font-weight:normal;font-family:'Liberation Mono',monospace;transform:scaleX(0.8452);transform-origin:0 0;-webkit-text-stroke:0.3px currentColor;"><span class="kf">function</span> <b class="fn">randomFloat</b>(low, high<span class="hl">er</span>) {</div>
<div class="t" style="left:48.80px;top:128.66px;font-size:11.5px;color:#1e1e1e;font-weight:normal;font-family:'Liberation Mono',monospace;transform:scaleX(0.8452);transform-origin:0 0;-webkit-text-stroke:0.3px currentColor;">    <span class="kf">return</span> low + <span class="mt">Math</span>.<span class="pm">random</span>() * (high<span class="hl">er</span> - low);</div>
<div class="t" style="left:48.80px;top:141.04px;font-size:11.5px;color:#1e1e1e;font-weight:normal;font-family:'Liberation Mono',monospace;transform:scaleX(0.8452);transform-origin:0 0;-webkit-text-stroke:0.3px currentColor;">}</div>
<div class="t" style="left:48.80px;top:165.80px;font-size:11.5px;color:#1e1e1e;font-weight:normal;font-family:'Liberation Mono',monospace;transform:scaleX(0.8452);transform-origin:0 0;-webkit-text-stroke:0.3px currentColor;"><span class="kf">function</span> <b class="fn">generateCloud</b>() {<span class="pill">···</span>}</div>
<svg class="abs" style="left:31.30000000000001px;top:167.5px;" width="7" height="7.5" viewBox="0 0 7 7.5"><path d="M0.5,0.4 V6.6 L5.9,3.5 Z" fill="#6a6a6a"/></svg>
<div class="abs" style="left:49.5px;top:80px;width:1px;height:12px;background-image:linear-gradient(#ececec 50%,transparent 50%);background-size:1px 2px"></div>
<div class="abs" style="left:49.5px;top:130px;width:1px;height:12px;background-image:linear-gradient(#ececec 50%,transparent 50%);background-size:1px 2px"></div>
<div class="abs" style="left:413px;top:56px;width:196px;height:317px;background:#fafafa;border-left:1px solid #e6e6e6"></div>
<div class="t" style="left:421.80px;top:65.97px;font-size:9.8px;color:#8a8a8a;font-weight:normal;font-family:'Liberation Sans',sans-serif;letter-spacing:0.18px">Quick Filter</div>
<div class="abs" style="left:480.4px;top:61.5px;width:122.3px;height:16.6px;background:#fff;border:1px solid #e6e6e6;border-radius:3.5px"></div>
<svg class="abs" style="left:484.5px;top:64px;" width="12" height="11" viewBox="0 0 12 11"><path d="M1,1.4 Q4,3.4 4.6,6 V9.8 M10.4,1.4 Q7.4,3.4 6.8,6 V9.8" fill="none" stroke="#2e86d4" stroke-width="1.3"/></svg>
<div class="t" style="left:500.80px;top:65.54px;font-size:10.3px;color:#2a83cf;font-weight:normal;font-family:'Liberation Sans',sans-serif;">random</div>
<svg class="abs" style="left:586.5px;top:64.19999999999999px;" width="11" height="11" viewBox="0 0 11 11"><circle cx="5.5" cy="5.5" r="4.8" fill="#c8c8c8"/><path d="M3.6,3.6 L7.4,7.4 M7.4,3.6 L3.6,7.4" stroke="#fff" stroke-width="1.1"/></svg>
<div class="abs" style="left:413px;top:84px;width:196px;height:35px;background:#f5f5f5"></div>
<div class="abs" style="left:412.79999999999995px;top:87.39999999999998px;width:1.8px;height:9.600000000000023px;background:#3b85d6"></div>
<svg class="abs" style="left:432px;top:85.30000000000001px;" width="14" height="14" viewBox="0 0 14 14"><path d="M6.14,7.28 L6.05,7.14 L5.98,6.98 L5.94,6.81 L5.93,6.61 L5.95,6.41 L6.02,6.21 L6.12,6.02 L6.26,5.83 L6.44,5.67 L6.65,5.54 L6.89,5.44 L7.15,5.39 L7.43,5.38 L7.72,5.41 L8.00,5.50 L8.27,5.64 L8.53,5.84 L8.75,6.07 L8.94,6.35 L9.07,6.67 L9.16,7.02 L9.19,7.38 L9.15,7.76 L9.05,8.13 L8.88,8.49 L8.66,8.82 L8.37,9.12 L8.02,9.37 L7.64,9.56 L7.21,9.69 L6.76,9.75 L6.30,9.73 L5.84,9.63 L5.39,9.46 L4.96,9.20 L4.58,8.88 L4.25,8.48 L3.99,8.03 L3.80,7.53 L3.70,7.00 L3.69,6.45 L3.76,5.89 L3.94,5.35 L4.20,4.83 L4.56,4.36 L4.99,3.94 L5.50,3.60 L6.06,3.34 L6.67,3.17 L7.31,3.11 L7.95,3.16 L8.60,3.31 L9.21,3.57 L9.79,3.94 L10.30,4.40 L10.73,4.95 L11.08,5.57 L11.31,6.25 L11.44,6.97 L11.44,7.70 L11.33,8.44 L11.08,9.16 L10.72,9.84 L10.24,10.46 L9.67,10.99 L9.00,11.43 L8.26,11.76 L7.47,11.96 L6.64,12.03 L5.81,11.96 L4.99,11.75 L4.20,11.41 L3.48,10.93 L2.83,10.34 L2.29,9.64 L1.86,8.85 L1.57,7.99 L1.42,7.09 L1.42,6.16 L1.58,5.24" fill="none" stroke="#8f6fcc" stroke-width="1.3" stroke-linecap="round"/></svg>
<div class="t" style="left:450.70px;top:87.71px;font-size:10.1px;color:#222;font-weight:bold;font-family:'Liberation Sans',sans-serif;">randomInteger</div>
<div class="abs" style="left:412.79999999999995px;top:104.60000000000002px;width:1.8px;height:9.699999999999989px;background:#3b85d6"></div>
<svg class="abs" style="left:432px;top:102.80000000000001px;" width="14" height="14" viewBox="0 0 14 14"><path d="M6.14,7.28 L6.05,7.14 L5.98,6.98 L5.94,6.81 L5.93,6.61 L5.95,6.41 L6.02,6.21 L6.12,6.02 L6.26,5.83 L6.44,5.67 L6.65,5.54 L6.89,5.44 L7.15,5.39 L7.43,5.38 L7.72,5.41 L8.00,5.50 L8.27,5.64 L8.53,5.84 L8.75,6.07 L8.94,6.35 L9.07,6.67 L9.16,7.02 L9.19,7.38 L9.15,7.76 L9.05,8.13 L8.88,8.49 L8.66,8.82 L8.37,9.12 L8.02,9.37 L7.64,9.56 L7.21,9.69 L6.76,9.75 L6.30,9.73 L5.84,9.63 L5.39,9.46 L4.96,9.20 L4.58,8.88 L4.25,8.48 L3.99,8.03 L3.80,7.53 L3.70,7.00 L3.69,6.45 L3.76,5.89 L3.94,5.35 L4.20,4.83 L4.56,4.36 L4.99,3.94 L5.50,3.60 L6.06,3.34 L6.67,3.17 L7.31,3.11 L7.95,3.16 L8.60,3.31 L9.21,3.57 L9.79,3.94 L10.30,4.40 L10.73,4.95 L11.08,5.57 L11.31,6.25 L11.44,6.97 L11.44,7.70 L11.33,8.44 L11.08,9.16 L10.72,9.84 L10.24,10.46 L9.67,10.99 L9.00,11.43 L8.26,11.76 L7.47,11.96 L6.64,12.03 L5.81,11.96 L4.99,11.75 L4.20,11.41 L3.48,10.93 L2.83,10.34 L2.29,9.64 L1.86,8.85 L1.57,7.99 L1.42,7.09 L1.42,6.16 L1.58,5.24" fill="none" stroke="#8f6fcc" stroke-width="1.3" stroke-linecap="round"/></svg>
<div class="t" style="left:450.70px;top:105.12px;font-size:10.1px;color:#222;font-weight:bold;font-family:'Liberation Sans',sans-serif;">randomFloat</div>
</div>
</body></html>
